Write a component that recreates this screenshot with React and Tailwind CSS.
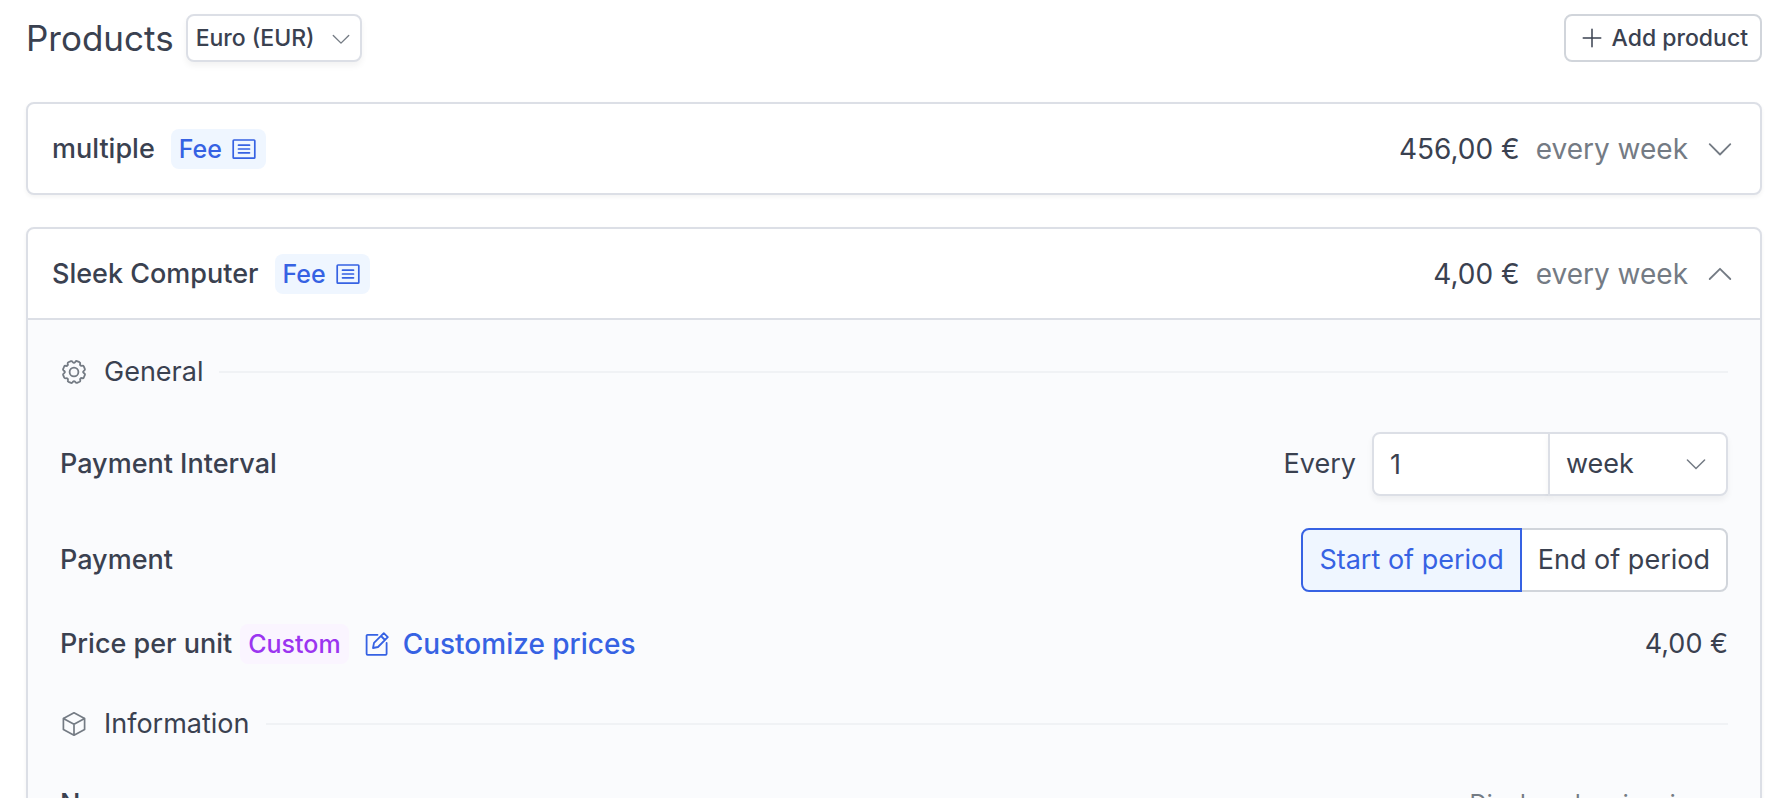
import { useState } from "react";

function Icon({ className, strokeWidth = 1, children }) {
  return (
    <svg
      className={className}
      viewBox="0 0 24 24"
      fill="none"
      stroke="currentColor"
      strokeWidth={strokeWidth}
      strokeLinecap="round"
      strokeLinejoin="round"
      aria-hidden="true"
    >
      {children}
    </svg>
  );
}

function ChevronIcon({ className, up }) {
  return (
    <Icon className={className} strokeWidth={1.8}>
      {up ? <path d="M1.7 17 12 6.8 22.3 17" /> : <path d="M1.7 7.2 12 17.5 22.3 7.2" />}
    </Icon>
  );
}

function ListIcon() {
  return (
    <Icon className="h-6 w-6" strokeWidth={1.7}>
      <rect x="1.2" y="3" width="21.6" height="18.2" rx="0.8" />
      <path d="M6.5 8.2h11M6.5 12h11M6.5 15.8h11" />
    </Icon>
  );
}

function GearIcon() {
  const teeth = [0, 45, 90, 135, 180, 225, 270, 315];
  return (
    <Icon className="h-6 w-6" strokeWidth={1.8}>
      <circle cx="12" cy="12" r="4.4" />
      {teeth.map((angle) => (
        <path
          key={angle}
          transform={`rotate(${angle} 12 12)`}
          d="M12 2.7Q13 2.7 13.4 1.8Q13.9.8 14.9 1.1L17.5 2.2Q18.5 2.7 18.1 3.7Q17.8 4.7 18.58 5.42"
        />
      ))}
    </Icon>
  );
}

function CubeIcon() {
  return (
    <Icon className="h-6 w-6" strokeWidth={1.7}>
      <path d="M12 .8 22.6 6.4v11.2L12 23.2 1.4 17.6V6.4zM1.4 6.4l10.6 5.8 10.6-5.8M12 12.2v11" />
    </Icon>
  );
}

function EditIcon() {
  return (
    <Icon className="h-6 w-6" strokeWidth={1.8}>
      <path d="M12.5 2.8H2.6a1 1 0 0 0-1 1v18a1 1 0 0 0 1 1h18a1 1 0 0 0 1-1V11" />
      <path d="M8 16l1-5.2L18.8 1.2l4 4L13 15zM16 4l4 4" />
    </Icon>
  );
}

function FeeBadge() {
  return (
    <span className="flex h-10 items-center gap-2.5 rounded-lg bg-[#eff6ff] px-2 pr-2.5 text-[25px] font-medium text-[#3662e3]">
      Fee
      <ListIcon />
    </span>
  );
}

function ProductHeader({ name, price, open, onToggle }) {
  return (
    <button
      type="button"
      aria-expanded={open}
      onClick={onToggle}
      className="flex h-[89px] w-full items-center justify-between pr-7 pl-6 text-left"
    >
      <span className="flex items-center gap-4">
        <span className="font-medium">{name}</span>
        <FeeBadge />
      </span>
      <span className="flex items-center text-[28px]">
        <span>{price}</span>
        <span className="ml-4 text-[#747b84]">every week</span>
        <ChevronIcon className="ml-5 h-6 w-6 text-[#747b84]" up={open} />
      </span>
    </button>
  );
}

function SectionTitle({ icon, children }) {
  return (
    <div className="flex h-10 items-center">
      <span className="flex w-7 justify-center text-[#747b84]">{icon}</span>
      <h2 className="mx-4">{children}</h2>
      <div className="h-0.5 flex-1 bg-[#f0f2f5]" />
    </div>
  );
}

function App() {
  const [firstOpen, setFirstOpen] = useState(false);
  const [secondOpen, setSecondOpen] = useState(true);
  const [timing, setTiming] = useState("start");

  const active = "relative border-[#3662e3] bg-[#eff6ff] text-[#3662e3]";
  const idle = "border-[#d1d5db] bg-white";

  return (
    <div className="h-screen overflow-hidden bg-white font-['Inter',sans-serif] text-[27px] leading-10 text-[#3a4150]">
      {/* Page header */}
      <header className="flex items-center pt-3.5 pr-[18px] pl-[26px]">
        <h1 className="text-[35px] leading-12">Products</h1>
        <div className="relative ml-3">
          <select
            aria-label="Currency"
            className="h-12 w-44 appearance-none rounded-lg border-2 border-[#dcdfe6] bg-white pl-2 text-[23px] font-medium shadow-[0_4px_6px_rgba(0,0,0,0.05)]"
          >
            <option>Euro (EUR)</option>
          </select>
          <ChevronIcon className="pointer-events-none absolute top-4 right-3 h-[18px] w-[18px] text-[#747b84]" />
        </div>
        <button
          type="button"
          className="ml-auto flex h-12 items-center gap-2.5 rounded-lg border-2 border-[#d1d5db] bg-white pr-3 pl-4 text-[23px] font-medium"
        >
          <Icon className="h-5 w-5" strokeWidth={1.8}>
            <path d="M12 1.5v21M1.5 12h21" />
          </Icon>
          Add product
        </button>
      </header>

      <main className="flex flex-col gap-8 pt-10 pr-[18px] pl-[26px]">
        <section className="rounded-lg border-2 border-[#dcdfe6] bg-white shadow-[0_2px_4px_rgba(0,0,0,0.05)]">
          <ProductHeader
            name="multiple"
            price="456,00 €"
            open={firstOpen}
            onToggle={() => setFirstOpen(!firstOpen)}
          />
        </section>

        <section className="overflow-hidden rounded-lg border-2 border-[#dcdfe6] bg-white shadow-[0_2px_4px_rgba(0,0,0,0.05)]">
          <ProductHeader
            name="Sleek Computer"
            price="4,00 €"
            open={secondOpen}
            onToggle={() => setSecondOpen(!secondOpen)}
          />
          {secondOpen && (
            <div className="border-t-2 border-[#dcdfe6] bg-[#fafbfd] px-8 py-8">
              <SectionTitle icon={<GearIcon />}>General</SectionTitle>

              {/* Payment interval */}
              <div className="mt-10 flex h-16 items-center justify-between">
                <label htmlFor="interval" className="font-medium">Payment Interval</label>
                <div className="flex items-center">
                  <span className="mr-4">Every</span>
                  <input
                    id="interval"
                    type="text"
                    defaultValue="1"
                    className="h-16 w-[178px] rounded-l-lg border-2 border-[#dcdfe6] bg-white px-4 shadow-[0_4px_6px_rgba(0,0,0,0.05)]"
                  />
                  <div className="relative -ml-0.5">
                    <select
                      aria-label="Interval unit"
                      className="h-16 w-[180px] appearance-none rounded-r-lg border-2 border-[#dcdfe6] bg-white pl-4 shadow-[0_4px_6px_rgba(0,0,0,0.05)]"
                    >
                      <option>week</option>
                    </select>
                    <ChevronIcon className="pointer-events-none absolute top-[22px] right-[22px] h-5 w-5 text-[#747b84]" />
                  </div>
                </div>
              </div>

              {/* Payment */}
              <div className="mt-8 flex h-16 items-center justify-between">
                <span className="font-medium">Payment</span>
                <div className="flex">
                  <button
                    type="button"
                    aria-pressed={timing === "start"}
                    onClick={() => setTiming("start")}
                    className={`h-16 rounded-l-lg border-2 px-4 ${timing === "start" ? active : idle}`}
                  >
                    Start of period
                  </button>
                  <button
                    type="button"
                    aria-pressed={timing === "end"}
                    onClick={() => setTiming("end")}
                    className={`-ml-0.5 h-16 rounded-r-lg border-2 px-4 ${timing === "end" ? active : idle}`}
                  >
                    End of period
                  </button>
                </div>
              </div>

              {/* Price */}
              <div className="mt-8 flex h-10 items-center">
                <span className="font-medium">Price per unit</span>
                <span className="ml-2 rounded-lg bg-[#faf5ff] px-2 text-[25px] font-medium text-[#9b35f0]">Custom</span>
                <button type="button" className="ml-4 flex items-center gap-3.5 text-[28px] font-medium text-[#3662e3]">
                  <EditIcon />
                  Customize prices
                </button>
                <span className="ml-auto">4,00 €</span>
              </div>

              <div className="mt-10">
                <SectionTitle icon={<CubeIcon />}>Information</SectionTitle>
              </div>

              {/* Name */}
              <div className="mt-10 flex items-center justify-between">
                <span className="font-medium">Name</span>
                <span className="pr-3 text-2xl text-[#747b84]">Displayed on invoices</span>
              </div>
            </div>
          )}
        </section>
      </main>
    </div>
  );
}

export default App;
